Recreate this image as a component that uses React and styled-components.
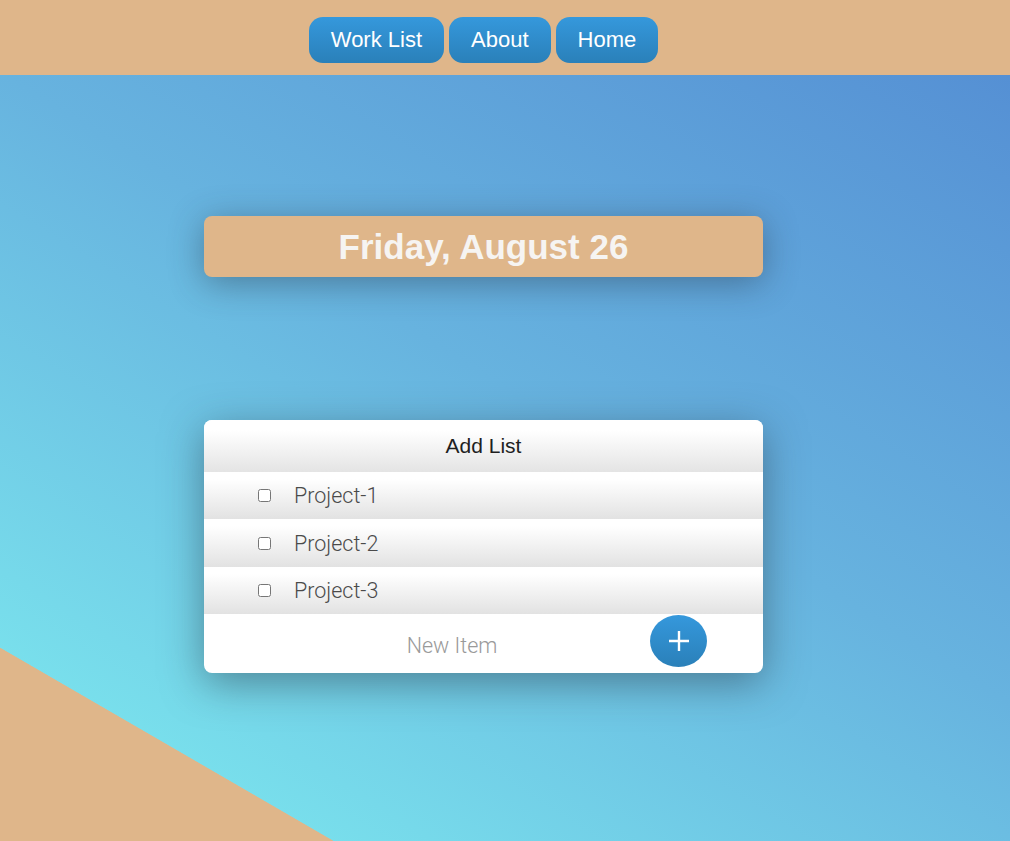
import React from "react";
import styled, { createGlobalStyle } from "styled-components";

const GlobalStyle = createGlobalStyle`
  html, body {
    margin: 0;
    padding: 0;
    height: 100%;
  }
  body {
    font-family: "Liberation Sans", Arial, sans-serif;
    overflow: hidden;
  }
`;

const Header = styled.header`
  height: 75px;
  box-sizing: border-box;
  background-color: #dfb68a;
  display: flex;
  justify-content: center;
  align-items: flex-start;
  padding: 17px 43px 0 0;
  gap: 5px;
`;

const NavButton = styled.button`
  height: 46px;
  padding: 0 22px;
  border: none;
  border-radius: 14px;
  background: linear-gradient(to bottom, #3598dc, #2a80b9);
  color: white;
  font-family: "Liberation Sans", Arial, sans-serif;
  font-size: 22px;
  cursor: pointer;
`;

const Main = styled.main`
  height: 766px;
  box-sizing: border-box;
  padding: 141px 43px 0 0;
  background:
    linear-gradient(to top right, #dfb68a 50%, transparent 50.2%) left bottom / 333px 193px no-repeat,
    linear-gradient(32deg, #7ae3ed 10%, #67b3df 55%, #5590d4 100%);
`;

const Column = styled.div`
  width: 559px;
  margin: 0 auto;
  display: flex;
  flex-direction: column;
  gap: 143px;
`;

const DateBox = styled.div`
  height: 61px;
  border-radius: 8px;
  background-color: #dfb68a;
  box-shadow: 0 6px 34px rgba(40, 55, 70, 0.45);
  display: flex;
  align-items: center;
  justify-content: center;
  h1 {
    margin: 0;
    font-size: 35px;
    font-weight: bold;
    color: #f6f4f2;
  }
`;

const Card = styled.div`
  background: white;
  border-radius: 8px;
  overflow: hidden;
  box-shadow: 0 10px 40px rgba(40, 55, 70, 0.5);
`;

const CardTitle = styled.div`
  height: 52px;
  display: flex;
  align-items: center;
  justify-content: center;
  background: linear-gradient(to bottom, #ffffff 20%, #e4e4e4);
  color: #1f1f1f;
  font-size: 21px;
`;

const Item = styled.label`
  height: 47.4px;
  display: flex;
  align-items: center;
  gap: 23px;
  padding-left: 54px;
  background: linear-gradient(to bottom, #ffffff 15%, #e2e2e2);
  font-family: Roboto, sans-serif;
  font-weight: 300;
  font-size: 21.5px;
  color: #4a4a4a;
  input {
    margin: 0;
    width: 13px;
    height: 13px;
  }
`;

const AddForm = styled.form`
  height: 59px;
  display: flex;
  align-items: center;
  padding: 0 56px 0 50px;
`;

const NewInput = styled.input`
  flex: 1;
  border: none;
  outline: none;
  text-align: center;
  font-family: Roboto, sans-serif;
  font-weight: 300;
  font-size: 21.5px;
  color: #444;
  padding-top: 4px;
  &::placeholder {
    color: #9a9a9a;
  }
`;

const PlusButton = styled.button`
  width: 57px;
  height: 52px;
  margin-top: -6px;
  border: none;
  border-radius: 50%;
  background: linear-gradient(to bottom, #3598dc, #2a80b9);
  display: flex;
  align-items: center;
  justify-content: center;
  padding: 0;
  cursor: pointer;
`;

const items = ["Project-1", "Project-2", "Project-3"];

export default function App() {
  return (
    <>
      <GlobalStyle />
      <Header>
        <NavButton>Work List</NavButton>
        <NavButton>About</NavButton>
        <NavButton>Home</NavButton>
      </Header>
      <Main>
        <Column>
          <DateBox>
            <h1>Friday, August 26</h1>
          </DateBox>
          <Card>
            <CardTitle>Add List</CardTitle>
            {items.map((item) => (
              <Item key={item}>
                <input type="checkbox" />
                <span>{item}</span>
              </Item>
            ))}
            <AddForm onSubmit={(e) => e.preventDefault()}>
              <NewInput type="text" placeholder="New Item" />
              <PlusButton type="submit">
                <svg width="22" height="22" viewBox="0 0 22 22">
                  <path d="M11 1v20M1 11h20" stroke="white" strokeWidth="2.4" />
                </svg>
              </PlusButton>
            </AddForm>
          </Card>
        </Column>
      </Main>
    </>
  );
}
